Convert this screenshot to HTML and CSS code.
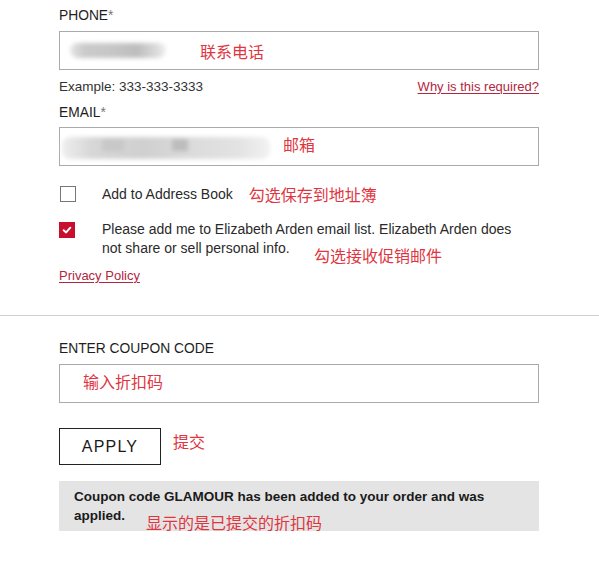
FILE: index.html
```html
<!DOCTYPE html>
<html lang="en">
<head>
<meta charset="utf-8">
<title>Contact details</title>
<link rel="stylesheet" href="styles.css">
</head>
<body>
<div class="page">
  <section class="contact">
    <div class="label">PHONE<span class="req">*</span></div>
    <div class="field">
      <span class="blur blur-phone"></span>
      <span class="note note-phone">联系电话</span>
    </div>
    <div class="help-row">
      <span class="help">Example: 333-333-3333</span>
      <a class="link" href="#">Why is this required?</a>
    </div>
    <div class="label label-email">EMAIL<span class="req">*</span></div>
    <div class="field">
      <span class="blur blur-email"><span class="blur-dark"></span><span class="blur-dark blur-dark2"></span></span>
      <span class="note note-email">邮箱</span>
    </div>

    <div class="check-row check-first">
      <span class="box"></span>
      <span class="check-text">Add to Address Book</span>
      <span class="note note-inline">勾选保存到地址簿</span>
    </div>
    <div class="check-row check-second">
      <span class="box box-on">
        <svg viewBox="0 0 16 16" width="16" height="16"><polyline points="4.2,8.3 7,10.8 11.8,5.4" fill="none" stroke="#fff" stroke-width="2.2" stroke-linecap="round" stroke-linejoin="round"/></svg>
      </span>
      <span class="check-text check-long">Please add me to Elizabeth Arden email list. Elizabeth Arden does not share or sell personal info.</span>
      <span class="note note-promo">勾选接收促销邮件</span>
    </div>
    <a class="link privacy" href="#">Privacy Policy</a>
  </section>

  <hr class="divider">

  <section class="coupon">
    <div class="label">ENTER COUPON CODE</div>
    <div class="field">
      <span class="note note-coupon">输入折扣码</span>
    </div>
    <div class="apply-row">
      <button class="apply" type="button">APPLY</button>
      <span class="note note-apply">提交</span>
    </div>
    <div class="message">
      <p class="message-text">Coupon code GLAMOUR has been added to your order and was applied.</p>
      <span class="note note-msg">显示的是已提交的折扣码</span>
    </div>
  </section>
</div>
</body>
</html>
```

FILE: styles.css
```css
* { box-sizing: border-box; }

html, body {
  margin: 0;
  padding: 0;
  background: #fff;
}

body {
  font-family: "Liberation Sans", Arial, "Noto Sans CJK SC", sans-serif;
  color: #222;
  font-size: 13.5px;
}

.page {
  width: 599px;
}

.contact,
.coupon {
  padding: 0 60px 0 59px;
}

.contact {
  padding-top: 8px;
}

.label {
  line-height: 16px;
  height: 16px;
  font-size: 13.8px;
  color: #1e1e1e;
  margin-bottom: 7px;
}

.req {
  color: #777;
}

.label-email {
  margin-top: 10px;
  margin-bottom: 6px;
}

.field {
  height: 39px;
  border: 1px solid #aaa;
  display: flex;
  align-items: center;
  background: #fff;
}

.blur {
  display: block;
  border-radius: 8px;
  filter: blur(2px);
}

.blur-phone {
  width: 96px;
  height: 15px;
  margin-left: 10px;
  background: linear-gradient(90deg, #e6e6e6 0%, #cacaca 15%, #c6c6c6 45%, #bdbdbd 70%, #d8d8d8 88%, #eeeeee 100%);
}

.blur-email {
  position: relative;
  width: 208px;
  height: 22px;
  margin-left: 2px;
  margin-top: 2px;
  background: linear-gradient(90deg, #eeeeee 0%, #d6d6d6 15%, #d0d0d0 40%, #dadada 60%, #e3e3e3 85%, #f2f2f2 100%);
}

.blur-dark {
  position: absolute;
  left: 110px;
  top: 2px;
  width: 16px;
  height: 12px;
  background: #bdbdbd;
}

.blur-dark2 {
  left: 40px;
  width: 22px;
  background: #c8c8c8;
}

.note {
  font-family: "Noto Sans CJK SC", "Noto Sans CJK JP", sans-serif;
  font-size: 16px;
  line-height: 20px;
  color: #e0353f;
  white-space: nowrap;
}

.note-phone {
  margin-left: 34px;
}

.note-email {
  margin-left: 13px;
  margin-top: -6px;
}

.help-row {
  margin-top: 9px;
  display: flex;
  justify-content: space-between;
  line-height: 16px;
  height: 16px;
}

.help {
  font-size: 13.5px;
  color: #333;
}

.link {
  font-size: 13px;
  color: #b3263d;
  text-decoration: underline;
  text-underline-offset: 2px;
}

.check-row {
  position: relative;
  display: flex;
  align-items: flex-start;
  color: #2a2a2a;
}

.check-first {
  margin-top: 18px;
  align-items: center;
  line-height: 16px;
}

.check-second {
  margin-top: 16px;
  line-height: 19px;
}

.box {
  flex: none;
  width: 16px;
  height: 16px;
  border: 1px solid #777;
  margin-left: 1px;
  margin-right: 26px;
  background: #fff;
}

.check-second .box {
  margin-top: 2px;
  margin-left: 0;
  margin-right: 27px;
}

.box-on {
  border-color: #c8102e;
  background: #c8102e;
  display: flex;
  align-items: center;
  justify-content: center;
}

.box-on svg {
  display: block;
}

.check-text {
  font-size: 14px;
}

.check-long {
  width: 424px;
}

.note-inline {
  margin-left: 16px;
}

.note-promo {
  position: absolute;
  left: 255px;
  top: 25px;
}

.privacy {
  display: inline-block;
  margin-top: 10px;
  line-height: 16px;
}

.divider {
  margin: 31px 0 0 0;
  border: none;
  border-top: 1px solid #cfcfcf;
  height: 0;
}

.coupon {
  padding-top: 25px;
}

.note-coupon {
  margin-left: 23px;
  margin-top: -5px;
}

.apply-row {
  margin-top: 25px;
  display: flex;
  align-items: flex-start;
}

.apply {
  width: 102px;
  height: 37px;
  border: 1px solid #222;
  background: #fff;
  font-family: "Liberation Sans", Arial, sans-serif;
  font-size: 16px;
  letter-spacing: 1.2px;
  color: #1a1a1a;
  padding: 0;
  margin: 0;
}

.note-apply {
  margin-left: 12px;
  margin-top: 3px;
}

.message {
  position: relative;
  margin-top: 16px;
  height: 50px;
  padding: 6px 15px;
  background: #e4e4e4;
  width: 480px;
}

.message-text {
  margin: 0;
  width: 420px;
  font-size: 13.5px;
  font-weight: bold;
  line-height: 19px;
  color: #1a1a1a;
}

.note-msg {
  position: absolute;
  left: 87px;
  top: 31px;
}
```
